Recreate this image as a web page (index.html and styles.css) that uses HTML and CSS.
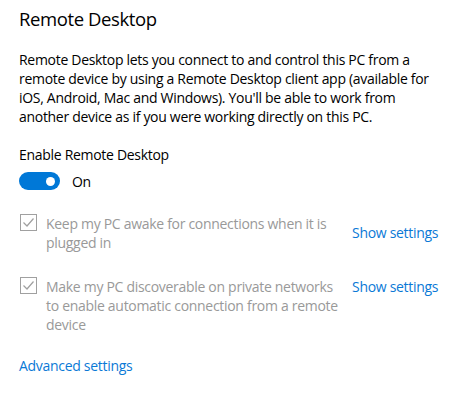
FILE: index.html
```html
<!DOCTYPE html>
<html lang="en">
<head>
  <meta charset="UTF-8" />
  <meta name="viewport" content="width=device-width, initial-scale=1" />
  <title>Remote Desktop</title>
  <link rel="stylesheet" href="styles.css">
</head>
<body>

<div class="page">
  <h1 class="title">Remote Desktop</h1>

  <p class="desc">
    Remote Desktop lets you connect to and control this PC from a
    remote device by using a Remote Desktop client app (available for
    iOS, Android, Mac and Windows). You'll be able to work from
    another device as if you were working directly on this PC.
  </p>

  <div class="field-label">Enable Remote Desktop</div>
  <div class="toggle-row">
    <span class="toggle"><span class="knob"></span></span>
    <span class="toggle-text">On</span>
  </div>

  <div class="option first">
    <span class="checkbox">
      <svg width="17" height="17" viewBox="0 0 17 17">
        <rect x="0.5" y="0.5" width="16" height="16" fill="none" stroke="#a0a0a0" />
        <path d="M3.5 8.5 L7 12 L13.5 4.5" fill="none" stroke="#a0a0a0" stroke-width="1.2" />
      </svg>
    </span>
    <span class="option-text">Keep my PC awake for connections when it is plugged in</span>
    <a href="#" class="link show-link">Show settings</a>
  </div>

  <div class="option second">
    <span class="checkbox">
      <svg width="17" height="17" viewBox="0 0 17 17">
        <rect x="0.5" y="0.5" width="16" height="16" fill="none" stroke="#a0a0a0" />
        <path d="M3.5 8.5 L7 12 L13.5 4.5" fill="none" stroke="#a0a0a0" stroke-width="1.2" />
      </svg>
    </span>
    <span class="option-text">Make my PC discoverable on private networks to enable automatic connection from a remote device</span>
    <a href="#" class="link show-link">Show settings</a>
  </div>

  <a href="#" class="link advanced">Advanced settings</a>
</div>

</body>
</html>
```

FILE: styles.css
```css
* {
  margin: 0; padding: 0; box-sizing: border-box;
  font-family: 'Open Sans', 'Noto Sans', sans-serif;
}
body {
  background: #fff;
  color: #000;
}
.page {
  padding: 5px 0 0 19px;
  letter-spacing: -0.3px;
}
.title {
  font-size: 18.5px;
  font-weight: normal;
  line-height: 28px;
  letter-spacing: -0.4px;
}
.desc {
  margin-top: 17px;
  width: 414px;
  font-size: 14px;
  line-height: 19px;
}
.field-label {
  margin-top: 19px;
  font-size: 14px;
  line-height: 20px;
}
.toggle-row {
  display: flex;
  align-items: center;
  gap: 12px;
  margin-top: 6px;
  height: 20px;
}
.toggle {
  width: 41px;
  height: 18px;
  border-radius: 9px;
  background: #0078d7;
  display: flex;
  align-items: center;
  justify-content: flex-end;
  padding-right: 5px;
}
.knob {
  width: 9px;
  height: 9px;
  border-radius: 50%;
  background: #fff;
}
.toggle-text {
  font-size: 14px;
}
.option {
  display: flex;
  align-items: flex-start;
}
.option.first {
  margin-top: 23px;
}
.option.second {
  margin-top: 25px;
}
.checkbox {
  width: 17px;
  height: 17px;
  margin: 0 9px 0 1px;
  flex: none;
  display: flex;
}
.option-text {
  width: 292px;
  font-size: 14px;
  line-height: 19px;
  color: #999;
}
.link {
  color: #0a79d6;
  text-decoration: none;
  font-size: 14px;
}
.show-link {
  margin-left: 14px;
  white-space: nowrap;
}
.first .show-link {
  margin-top: 9px;
}
.advanced {
  display: inline-block;
  margin-top: 22px;
}
```
